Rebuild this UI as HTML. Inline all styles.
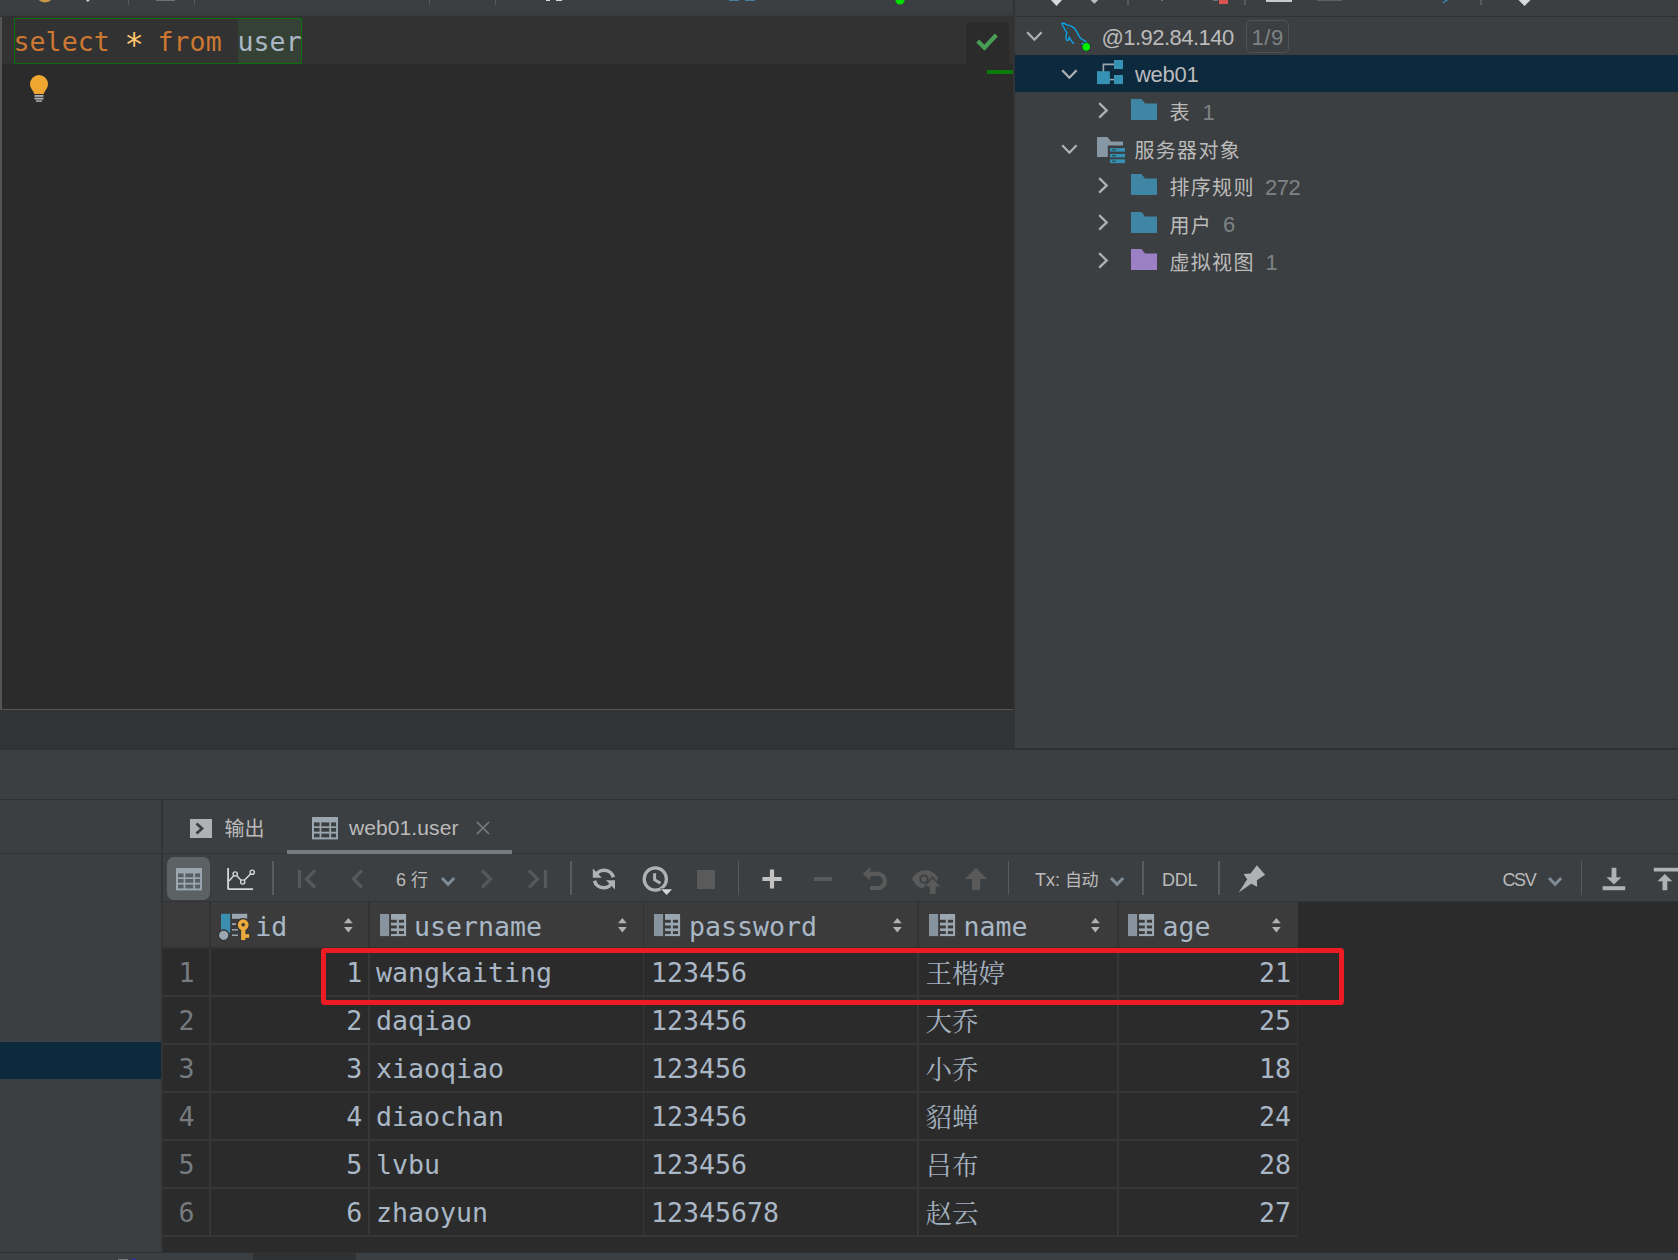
<!DOCTYPE html>
<html lang="zh"><head><meta charset="utf-8"><title>DataGrip - web01.user</title>
<style>
html,body{margin:0;padding:0}
body{width:1678px;height:1260px;overflow:hidden;background:#3c3f41;position:relative}
.r{position:absolute;display:block}
.t{position:absolute;display:block;white-space:pre}
.ui{font-family:"Liberation Sans","Noto Sans CJK SC",sans-serif}
.mono{font-family:"DejaVu Sans Mono","Liberation Mono","Noto Sans CJK SC",monospace}
.serif{font-family:"Noto Serif CJK SC","Liberation Serif",serif}
</style></head><body>
<div class="r" style="left:0px;top:0px;width:1013px;height:16px;background:linear-gradient(#3c3f41 0,#3c3f41 10px,#373a3c 16px);"></div>
<svg class="r" style="left:36px;top:0px;" width="18" height="3" viewBox="0 0 18 3"><ellipse cx="9" cy="-6" rx="9" ry="8.5" fill="#c99a45"/></svg>
<svg class="r" style="left:83px;top:0px;" width="8" height="3" viewBox="0 0 8 3"><path d="M2.800 0h4l-2 2z" fill="#d0d0d0"/></svg>
<div class="r" style="left:128px;top:0px;width:1px;height:5px;background:#55585a;"></div>
<div class="r" style="left:194px;top:0px;width:1px;height:5px;background:#55585a;"></div>
<div class="r" style="left:429px;top:0px;width:1px;height:5px;background:#55585a;"></div>
<div class="r" style="left:495px;top:0px;width:1px;height:5px;background:#55585a;"></div>
<div class="r" style="left:156px;top:0px;width:19px;height:1px;background:#6e7173;"></div>
<div class="r" style="left:546px;top:0px;width:4px;height:1px;background:#d8d8d8;"></div>
<div class="r" style="left:556px;top:0px;width:6px;height:1px;background:#d8d8d8;"></div>
<div class="r" style="left:729px;top:0px;width:10px;height:1px;background:#3f7f99;"></div>
<div class="r" style="left:745px;top:0px;width:10px;height:1px;background:#3f7f99;"></div>
<svg class="r" style="left:895px;top:0px;" width="10" height="5" viewBox="0 0 10 5"><circle cx="5" cy="0" r="4.5" fill="#00e000"/></svg>
<svg class="r" style="left:1050px;top:0px;" width="14" height="7" viewBox="0 0 14 7"><path d="M1 0H12L6.500 5.900z" fill="#d8d8d8"/></svg>
<svg class="r" style="left:1089px;top:0px;" width="11" height="5" viewBox="0 0 11 5"><path d="M1.600 0H9.200L5.400 3.700z" fill="#bdbdbd"/></svg>
<div class="r" style="left:1127px;top:0px;width:1.5px;height:5px;background:#5a5a58;"></div>
<div class="r" style="left:1244px;top:0px;width:1.5px;height:5px;background:#5a5a58;"></div>
<div class="r" style="left:1480px;top:0px;width:1.5px;height:4.5px;background:#5a5a58;"></div>
<div class="r" style="left:1161px;top:0px;width:2px;height:1px;background:#6e7173;"></div>
<div class="r" style="left:1218.5px;top:0px;width:9.5px;height:4px;background:#d9534f;"></div>
<div class="r" style="left:1213px;top:0px;width:5px;height:1px;background:#6e7173;"></div>
<div class="r" style="left:1266px;top:0px;width:26px;height:2px;background:#c9c9c9;"></div>
<div class="r" style="left:1317px;top:0px;width:25px;height:1px;background:#5e6163;"></div>
<svg class="r" style="left:1442px;top:0px;" width="6" height="3" viewBox="0 0 6 3"><path d="M0 3L4 0H6L1.500 3z" fill="#2f9fd8"/></svg>
<svg class="r" style="left:1517px;top:0px;" width="15" height="7" viewBox="0 0 15 7"><path d="M1.500 0H13.500L7.500 5.900z" fill="#d8d8d8"/></svg>
<div class="r" style="left:0px;top:16px;width:1013px;height:694px;background:#2b2b2b;"></div>
<div class="r" style="left:0px;top:16px;width:1015px;height:48px;background:#323232;"></div>
<div class="r" style="left:0px;top:17px;width:2px;height:693px;background:#555555;"></div>
<div class="r" style="left:0px;top:709px;width:1013px;height:1px;background:#555555;"></div>
<div class="r" style="left:1013px;top:0px;width:2px;height:749px;background:#323334;"></div>
<div class="r" style="left:238px;top:19px;width:63px;height:44px;background:#344134;"></div>
<div class="r" style="left:13.8px;top:17.6px;width:288.4px;height:46.6px;background:transparent;box-sizing:border-box;border:1.4px solid #0b700b"></div>
<span id="t1" class="t mono" style="left:13.6px;top:14.80px;font-size:26.6px;line-height:53px;color:#cc7832;letter-spacing:0.000px;">select</span>
<span id="t2" class="t mono" style="left:124.5px;top:12.43px;font-size:32px;line-height:64px;color:#ffc66d;letter-spacing:0.000px;">*</span>
<span id="t3" class="t mono" style="left:157.6px;top:14.80px;font-size:26.6px;line-height:53px;color:#cc7832;letter-spacing:0.000px;">from</span>
<span id="t4" class="t mono" style="left:237.6px;top:14.80px;font-size:26.6px;line-height:53px;color:#a9b7c6;letter-spacing:0.000px;">user</span>
<svg class="r" style="left:29px;top:74px;" width="20" height="28" viewBox="0 0 20 28"><path d="M10 1a9 9 0 0 1 9 9c0 3.6-2.2 5.6-3.6 8.2-.4.8-.6 1.3-.6 1.8H5.200c0-.5-.2-1-.6-1.8C3.200 15.600 1 13.600 1 10a9 9 0 0 1 9-9z" fill="#f0a732"/><rect x="5.500" y="21" width="9" height="1.800" fill="#afb1b3"/><rect x="5.500" y="23.700" width="9" height="1.800" fill="#afb1b3"/><rect x="7" y="26.300" width="6" height="1.500" fill="#afb1b3"/></svg>
<div class="r" style="left:966px;top:22px;width:43px;height:43px;background:#2b2b2b;border-radius:5px 5px 0 0"></div>
<svg class="r" style="left:974px;top:32px;" width="26" height="22" viewBox="0 0 26 22"><path d="M3.700 9L10.400 15.700L22.300 3" fill="none" stroke="#499c54" stroke-width="4.300"/></svg>
<div class="r" style="left:987px;top:70px;width:26px;height:4px;background:#0a7a0a;"></div>
<div class="r" style="left:0px;top:710px;width:1013px;height:38px;background:#313335;"></div>
<div class="r" style="left:0px;top:748px;width:1678px;height:2px;background:#2f3132;"></div>
<div class="r" style="left:0px;top:799px;width:1678px;height:1px;background:#2f3132;"></div>
<div class="r" style="left:1015px;top:16px;width:663px;height:1px;background:#2f3132;"></div>
<div class="r" style="left:1015px;top:55px;width:663px;height:37px;background:#0d293e;"></div>
<svg class="r" style="left:1026.2px;top:30.5px;" width="18" height="11" viewBox="0 0 18 11"><path d="M1.200 1.200L8.400 8.700L15.600 1.200" fill="none" stroke="#afb1b3" stroke-width="2.300"/></svg>
<svg class="r" style="left:1060px;top:21px;" width="32" height="32" viewBox="0 0 32 32"><g fill="none" stroke="#0aa6ec" stroke-width="1.350" stroke-linecap="round" stroke-linejoin="round"><path d="M2.100 2.400C3 2 4.400 2.300 6.400 3.600C8 4.200 9.300 4.300 12.100 5.600C15 7.200 17 10.700 18.400 14.100C19.200 16 19.900 17.500 22.100 18.400C24.500 19.300 26 20.500 27 21.600"/><path d="M26.400 22.100L22.400 22.400L22.100 23.600"/><path d="M2.100 2.400C2 3.500 2.600 4.500 4.100 7C5 9 6 10.500 7 11.900C6.300 13 6 15 6 17C6.200 18.500 6.800 19.300 7.300 19.600C8 19.600 8.400 19.300 8.600 18.500L9.300 15.900L10.100 17.900C11 19.500 12 21 13.600 22.400"/></g><circle cx="8.100" cy="7" r="0.700" fill="#1d7fae"/><circle cx="26.300" cy="25.900" r="4.300" fill="#00f000" stroke="#2a2530" stroke-width="0.800"/></svg>
<span id="t5" class="t ui" style="left:1101.5px;top:15.68px;font-size:22px;line-height:44px;color:#bbbbbb;letter-spacing:-0.527px;">@1.92.84.140</span>
<div class="r" style="left:1246px;top:20px;width:43px;height:33px;background:transparent;box-sizing:border-box;border:1px solid #505355;border-radius:5px"></div>
<span id="t6" class="t ui" style="left:1251.5px;top:15.68px;font-size:22px;line-height:44px;color:#7f8284;letter-spacing:0.562px;">1/9</span>
<svg class="r" style="left:1061.2px;top:68.5px;" width="18" height="11" viewBox="0 0 18 11"><path d="M1.200 1.200L8.400 8.700L15.600 1.200" fill="none" stroke="#afb1b3" stroke-width="2.300"/></svg>
<svg class="r" style="left:1097px;top:60px;" width="26" height="25" viewBox="0 0 26 25"><path d="M17 4.400H6.400V12.500" fill="none" stroke="#9aa7b0" stroke-width="1.600"/><path d="M12.500 19.600H17.500" fill="none" stroke="#9aa7b0" stroke-width="1.600"/><rect x="17" y="0" width="9" height="9" fill="#3592b4"/><rect x="0" y="11.200" width="12.900" height="12.900" fill="#3592b4"/><rect x="17" y="15" width="9" height="9.100" fill="#3592b4"/></svg>
<span id="t7" class="t ui" style="left:1135px;top:52.68px;font-size:22px;line-height:44px;color:#bbbbbb;letter-spacing:-0.299px;">web01</span>
<svg class="r" style="left:1097.5px;top:101.5px;" width="11" height="18" viewBox="0 0 11 18"><path d="M1.200 1.200L8.700 8.400L1.200 15.600" fill="none" stroke="#afb1b3" stroke-width="2.300"/></svg>
<svg class="r" style="left:1131px;top:99.1px;" width="26" height="21" viewBox="0 0 26 21"><path d="M0 0H10.500L14 4.500H26V21H0z" fill="#3e86a3"/></svg>
<span id="t8" class="t ui" style="left:1169.5px;top:93.37px;font-size:20px;line-height:40px;color:#bbbbbb;letter-spacing:1.300px;">表</span>
<span id="t9" class="t ui" style="left:1202.5px;top:90.68px;font-size:22px;line-height:44px;color:#7f8284;letter-spacing:0.000px;">1</span>
<svg class="r" style="left:1061.2px;top:143.5px;" width="18" height="11" viewBox="0 0 18 11"><path d="M1.200 1.200L8.400 8.700L15.600 1.200" fill="none" stroke="#afb1b3" stroke-width="2.300"/></svg>
<svg class="r" style="left:1097px;top:137px;" width="29" height="27" viewBox="0 0 29 27"><path d="M0 0H10.500L14 4.500H26V8.400H10.800V20H0z" fill="#8797a3"/><rect x="13" y="11.100" width="15" height="3.500" fill="#3592b4"/><rect x="13" y="16.900" width="15" height="3.500" fill="#3592b4"/><rect x="13" y="22.300" width="15" height="3.800" fill="#3592b4"/><rect x="15" y="12.300" width="4" height="1.200" fill="#2b4a58"/><rect x="15" y="18.100" width="4" height="1.200" fill="#2b4a58"/><rect x="15" y="23.600" width="4" height="1.200" fill="#2b4a58"/></svg>
<span id="t10" class="t ui" style="left:1134.5px;top:130.87px;font-size:20px;line-height:40px;color:#bbbbbb;letter-spacing:1.300px;">服务器对象</span>
<svg class="r" style="left:1097.5px;top:176.5px;" width="11" height="18" viewBox="0 0 11 18"><path d="M1.200 1.200L8.700 8.400L1.200 15.600" fill="none" stroke="#afb1b3" stroke-width="2.300"/></svg>
<svg class="r" style="left:1131px;top:174.1px;" width="26" height="21" viewBox="0 0 26 21"><path d="M0 0H10.500L14 4.500H26V21H0z" fill="#3e86a3"/></svg>
<span id="t11" class="t ui" style="left:1169.5px;top:168.37px;font-size:20px;line-height:40px;color:#bbbbbb;letter-spacing:1.300px;">排序规则</span>
<span id="t12" class="t ui" style="left:1265px;top:165.68px;font-size:22px;line-height:44px;color:#7f8284;letter-spacing:-0.487px;">272</span>
<svg class="r" style="left:1097.5px;top:213.5px;" width="11" height="18" viewBox="0 0 11 18"><path d="M1.200 1.200L8.700 8.400L1.200 15.600" fill="none" stroke="#afb1b3" stroke-width="2.300"/></svg>
<svg class="r" style="left:1131px;top:211.6px;" width="26" height="21" viewBox="0 0 26 21"><path d="M0 0H10.500L14 4.500H26V21H0z" fill="#3e86a3"/></svg>
<span id="t13" class="t ui" style="left:1169.5px;top:205.87px;font-size:20px;line-height:40px;color:#bbbbbb;letter-spacing:1.300px;">用户</span>
<span id="t14" class="t ui" style="left:1223px;top:203.18px;font-size:22px;line-height:44px;color:#7f8284;letter-spacing:0.000px;">6</span>
<svg class="r" style="left:1097.5px;top:251.5px;" width="11" height="18" viewBox="0 0 11 18"><path d="M1.200 1.200L8.700 8.400L1.200 15.600" fill="none" stroke="#afb1b3" stroke-width="2.300"/></svg>
<svg class="r" style="left:1131px;top:249.1px;" width="26" height="21" viewBox="0 0 26 21"><path d="M0 0H10.500L14 4.500H26V21H0z" fill="#9b80c6"/></svg>
<span id="t15" class="t ui" style="left:1169.5px;top:243.37px;font-size:20px;line-height:40px;color:#bbbbbb;letter-spacing:1.300px;">虚拟视图</span>
<span id="t16" class="t ui" style="left:1265.5px;top:240.68px;font-size:22px;line-height:44px;color:#7f8284;letter-spacing:0.000px;">1</span>
<div class="r" style="left:0px;top:1042px;width:161px;height:37px;background:#0d293e;"></div>
<div class="r" style="left:161px;top:800px;width:2px;height:452px;background:#313334;"></div>
<div class="r" style="left:0px;top:853px;width:1678px;height:1px;background:#313334;"></div>
<svg class="r" style="left:190px;top:819px;" width="22" height="19" viewBox="0 0 22 19"><rect width="22" height="19" fill="#afb1b3"/><path d="M6.500 4.500L12 9.500L6.500 14.500" fill="none" stroke="#3c3f41" stroke-width="2.800"/></svg>
<span id="t17" class="t ui" style="left:224.5px;top:809.07px;font-size:20px;line-height:40px;color:#bbbbbb;letter-spacing:0.000px;">输出</span>
<svg class="r" style="left:312px;top:816.8px;" width="26" height="23" viewBox="0 0 26 23"><rect x="0" y="0" width="26" height="22.400" fill="#9aa7b0"/><rect x="2.0" y="5.4" width="5.6" height="3.9" fill="#3c3f41"/><rect x="2.0" y="11.0" width="5.6" height="3.7" fill="#3c3f41"/><rect x="2.0" y="16.6" width="5.6" height="3.8" fill="#3c3f41"/><rect x="9.3" y="5.4" width="8.0" height="3.9" fill="#3c3f41"/><rect x="9.3" y="11.0" width="8.0" height="3.7" fill="#3c3f41"/><rect x="9.3" y="16.6" width="8.0" height="3.8" fill="#3c3f41"/><rect x="19.1" y="5.4" width="5.0" height="3.9" fill="#3c3f41"/><rect x="19.1" y="11.0" width="5.0" height="3.7" fill="#3c3f41"/><rect x="19.1" y="16.6" width="5.0" height="3.8" fill="#3c3f41"/></svg>
<span id="t18" class="t ui" style="left:349px;top:806.72px;font-size:21px;line-height:42px;color:#bbbbbb;letter-spacing:0.097px;">web01.user</span>
<svg class="r" style="left:476px;top:821px;" width="14" height="14" viewBox="0 0 14 14"><path d="M1 1L13 13M13 1L1 13" stroke="#7a7d7f" stroke-width="1.600" fill="none"/></svg>
<div class="r" style="left:287px;top:850px;width:225px;height:4px;background:#747a80;"></div>
<div class="r" style="left:167px;top:857px;width:43px;height:43px;background:#5c6164;border-radius:7px"></div>
<svg class="r" style="left:176px;top:867.8px;" width="26" height="23" viewBox="0 0 26 23"><rect x="0" y="0" width="26" height="22.400" fill="#9aa7b0"/><rect x="2.0" y="5.4" width="5.6" height="3.9" fill="#595e62"/><rect x="2.0" y="11.0" width="5.6" height="3.7" fill="#595e62"/><rect x="2.0" y="16.6" width="5.6" height="3.8" fill="#595e62"/><rect x="9.3" y="5.4" width="8.0" height="3.9" fill="#595e62"/><rect x="9.3" y="11.0" width="8.0" height="3.7" fill="#595e62"/><rect x="9.3" y="16.6" width="8.0" height="3.8" fill="#595e62"/><rect x="19.1" y="5.4" width="5.0" height="3.9" fill="#595e62"/><rect x="19.1" y="11.0" width="5.0" height="3.7" fill="#595e62"/><rect x="19.1" y="16.6" width="5.0" height="3.8" fill="#595e62"/></svg>
<svg class="r" style="left:226px;top:866px;" width="31" height="26" viewBox="0 0 31 26"><path d="M2.100 2V22.200Q2.100 23.200 3.100 23.200H27.100" fill="none" stroke="#d6d6da" stroke-width="1.800"/><path d="M3 15.100L9.200 8L16.700 16L26.200 6.200" fill="none" stroke="#d6d6da" stroke-width="1.500"/><circle cx="9.200" cy="8" r="2.100" fill="#3c3f41" stroke="#d6d6da" stroke-width="1.400"/><circle cx="16.700" cy="16" r="2.100" fill="#3c3f41" stroke="#d6d6da" stroke-width="1.400"/><circle cx="26.200" cy="6.200" r="2.100" fill="#3c3f41" stroke="#d6d6da" stroke-width="1.400"/></svg>
<div class="r" style="left:272px;top:861px;width:1.5px;height:34px;background:#595c5e;"></div>
<div class="r" style="left:570px;top:861px;width:1.5px;height:34px;background:#595c5e;"></div>
<div class="r" style="left:737.5px;top:861px;width:1.5px;height:34px;background:#595c5e;"></div>
<div class="r" style="left:1007.5px;top:861px;width:1.5px;height:34px;background:#595c5e;"></div>
<div class="r" style="left:1142px;top:861px;width:1.5px;height:34px;background:#595c5e;"></div>
<div class="r" style="left:1218px;top:861px;width:1.5px;height:34px;background:#595c5e;"></div>
<div class="r" style="left:1580.5px;top:861px;width:1.5px;height:34px;background:#595c5e;"></div>
<svg class="r" style="left:298px;top:869px;" width="19" height="20" viewBox="0 0 19 20"><path d="M1.500 1V19" stroke="#585858" stroke-width="3.200" fill="none"/><path d="M17 1.500L8.500 10L17 18.500" stroke="#585858" stroke-width="3.200" fill="none"/></svg>
<svg class="r" style="left:351px;top:869px;" width="13" height="20" viewBox="0 0 13 20"><path d="M11 1.500L2.500 10L11 18.500" stroke="#585858" stroke-width="3.200" fill="none"/></svg>
<span id="t19" class="t ui" style="left:396px;top:861.76px;font-size:18px;line-height:36px;color:#bbbbbb;letter-spacing:0.000px;">6 <span style="font-size:17px">行</span></span>
<svg class="r" style="left:440px;top:875.5px;" width="17" height="12" viewBox="0 0 17 12"><path d="M2 2L8.100 8.300L14.200 2" stroke="#7d8b99" stroke-width="3" fill="none"/></svg>
<svg class="r" style="left:479.5px;top:869px;" width="13" height="20" viewBox="0 0 13 20"><path d="M2 1.500L10.500 10L2 18.500" stroke="#585858" stroke-width="3.200" fill="none"/></svg>
<svg class="r" style="left:527px;top:869px;" width="20" height="20" viewBox="0 0 20 20"><path d="M18.500 1V19" stroke="#585858" stroke-width="3.200" fill="none"/><path d="M2 1.500L10.500 10L2 18.500" stroke="#585858" stroke-width="3.200" fill="none"/></svg>
<svg class="r" style="left:592px;top:867px;" width="25" height="25" viewBox="0 0 25 25"><path d="M3.300 9.500A9.400 9.400 0 0 1 21.300 10.300" fill="none" stroke="#afb1b3" stroke-width="3.600"/><path d="M0.800 1.500V10.700H9.900z" fill="#afb1b3"/><path d="M20.500 14.500A9.400 9.400 0 0 1 2.500 13.700" fill="none" stroke="#afb1b3" stroke-width="3.600"/><path d="M23 22.500V13.300H13.900z" fill="#afb1b3"/></svg>
<svg class="r" style="left:641px;top:865px;" width="33" height="32" viewBox="0 0 33 32"><circle cx="14.300" cy="14" r="11.100" fill="none" stroke="#afb1b3" stroke-width="3.300"/><path d="M13.600 8.200V14.700L19.400 18.300" fill="none" stroke="#afb1b3" stroke-width="3"/><path d="M19 23.500H32.500L25.700 31z" fill="#3c3f41"/><path d="M20.300 24.200H31L25.600 29.900z" fill="#d6d6d6"/></svg>
<div class="r" style="left:696.5px;top:870px;width:18.5px;height:18.5px;background:#5a5a5a;"></div>
<svg class="r" style="left:762px;top:869px;" width="20" height="20" viewBox="0 0 20 20"><path d="M10 0.400V19.500M0.400 10H19.600" stroke="#c2c2c2" stroke-width="4.200" fill="none"/></svg>
<div class="r" style="left:813.8px;top:876.7px;width:18.6px;height:4.2px;background:#5a5a5a;"></div>
<svg class="r" style="left:862px;top:866px;" width="27" height="26" viewBox="0 0 27 26"><path d="M8 7.900H15.900A7.050 7.050 0 0 1 15.900 22H8" fill="none" stroke="#5a5a5a" stroke-width="4.200"/><path d="M0.800 7.900L8.200 0.700V14.600z" fill="#5a5a5a"/></svg>
<svg class="r" style="left:911px;top:868px;" width="30" height="28" viewBox="0 0 30 28"><path d="M1.100 11.100C6 0 21 -1 27 10.300C25 15 18 20.500 10.300 20C6 19 3 15.500 1.100 11.100z" fill="#5a5a5a"/><circle cx="13" cy="11.100" r="4.700" fill="#3c3f41"/><circle cx="13" cy="11.100" r="2.900" fill="#5a5a5a"/><path d="M21.500 7.800L30.800 19.800H25.800V27.500H17.200V19.800H12.200z" fill="#3c3f41"/><path d="M21.500 10.300L29 18.500H24.500V26H18.800V18.500H14.500z" fill="#5a5a5a"/></svg>
<svg class="r" style="left:964px;top:867px;" width="24" height="24" viewBox="0 0 24 24"><path d="M12 0.900L23.200 12.100H16.200V23H8V12.100H0.800z" fill="#5a5a5a"/></svg>
<span id="t20" class="t ui" style="left:1035px;top:861.76px;font-size:18px;line-height:36px;color:#bbbbbb;letter-spacing:0.000px;">Tx: <span style="font-size:17px;letter-spacing:-0.5px">自动</span></span>
<svg class="r" style="left:1109px;top:875.5px;" width="17" height="12" viewBox="0 0 17 12"><path d="M2 2L8.100 8.300L14.200 2" stroke="#7d8b99" stroke-width="3" fill="none"/></svg>
<span id="t21" class="t ui" style="left:1162px;top:861.76px;font-size:18px;line-height:36px;color:#bbbbbb;letter-spacing:-0.206px;">DDL</span>
<svg class="r" style="left:1237px;top:865px;" width="30" height="29" viewBox="0 0 30 29"><path d="M19.850 0.300L28.100 9.700L19.850 15.350L20.200 21.800L14.200 18.750L1.700 27.500L10.200 14.200L6.600 8.900L13.600 8.550z" fill="#afb1b3"/></svg>
<span id="t22" class="t ui" style="left:1502.5px;top:861.76px;font-size:18px;line-height:36px;color:#bbbbbb;letter-spacing:-1.406px;">CSV</span>
<svg class="r" style="left:1547px;top:875.5px;" width="17" height="12" viewBox="0 0 17 12"><path d="M2 2L8.100 8.300L14.200 2" stroke="#7d8b99" stroke-width="3" fill="none"/></svg>
<svg class="r" style="left:1602px;top:867px;" width="24" height="24" viewBox="0 0 24 24"><rect x="9.600" y="0.800" width="4.800" height="10" fill="#afb1b3"/><path d="M4.500 10.300H19.300L12 17.600z" fill="#afb1b3"/><rect x="0.600" y="19.200" width="22.600" height="4" fill="#afb1b3"/></svg>
<svg class="r" style="left:1653px;top:867px;" width="25" height="24" viewBox="0 0 25 24"><rect x="0.800" y="0.800" width="24.200" height="3.700" fill="#afb1b3"/><rect x="9.500" y="13" width="4.800" height="10.200" fill="#afb1b3"/><path d="M4.500 14.200H19.300L11.800 6.900z" fill="#afb1b3"/></svg>
<div class="r" style="left:163px;top:900px;width:1515px;height:352px;background:#2b2b2b;"></div>
<div class="r" style="left:163px;top:900px;width:1515px;height:0.6px;background:#3c3f41;"></div>
<div class="r" style="left:163px;top:900.6px;width:1515px;height:1.3px;background:#323334;"></div>
<div class="r" style="left:163px;top:901.8px;width:1134.5px;height:45.2px;background:#3b3b3b;"></div>
<div class="r" style="left:163px;top:947px;width:1134.5px;height:2px;background:#313131;"></div>
<div class="r" style="left:163px;top:995px;width:1134.5px;height:2px;background:#373737;"></div>
<div class="r" style="left:163px;top:1043px;width:1134.5px;height:2px;background:#373737;"></div>
<div class="r" style="left:163px;top:1091px;width:1134.5px;height:2px;background:#373737;"></div>
<div class="r" style="left:163px;top:1139px;width:1134.5px;height:2px;background:#373737;"></div>
<div class="r" style="left:163px;top:1187px;width:1134.5px;height:2px;background:#373737;"></div>
<div class="r" style="left:163px;top:1235px;width:1134.5px;height:2px;background:#373737;"></div>
<div class="r" style="left:209px;top:949px;width:2px;height:288px;background:#373737;"></div>
<div class="r" style="left:209px;top:901.8px;width:2px;height:45.2px;background:#323232;"></div>
<div class="r" style="left:368px;top:949px;width:2px;height:288px;background:#373737;"></div>
<div class="r" style="left:368px;top:901.8px;width:2px;height:45.2px;background:#323232;"></div>
<div class="r" style="left:642.7px;top:949px;width:1.5px;height:288px;background:#373737;"></div>
<div class="r" style="left:642.7px;top:901.8px;width:1.5px;height:45.2px;background:#323232;"></div>
<div class="r" style="left:917px;top:949px;width:2px;height:288px;background:#373737;"></div>
<div class="r" style="left:917px;top:901.8px;width:2px;height:45.2px;background:#323232;"></div>
<div class="r" style="left:1117px;top:949px;width:1.6px;height:288px;background:#373737;"></div>
<div class="r" style="left:1117px;top:901.8px;width:1.6px;height:45.2px;background:#323232;"></div>
<div class="r" style="left:1297px;top:949px;width:1.2px;height:288px;background:#343434;"></div>
<svg class="r" style="left:218px;top:912px;" width="33" height="30" viewBox="0 0 33 30"><rect x="3" y="1.800" width="9.200" height="19.300" fill="#3a8fb0"/><circle cx="5.700" cy="23.300" r="5.300" fill="#9aa7b0" stroke="#343434" stroke-width="1.300"/><rect x="14" y="1.800" width="15.200" height="5" fill="#9aa7b0"/><path d="M14 12.100H18M14 17.700H20M14 23.200H20" stroke="#9aa7b0" stroke-width="1.600"/><circle cx="25.200" cy="12.800" r="6.700" fill="#343434"/><rect x="22" y="15" width="6.500" height="14.200" fill="#343434"/><rect x="26" y="21" width="6.300" height="6" fill="#343434"/><circle cx="25.200" cy="12.800" r="3.600" fill="none" stroke="#eaa93c" stroke-width="3.700"/><rect x="23.100" y="16" width="4.300" height="12.100" fill="#eaa93c"/><rect x="27" y="22.100" width="4.200" height="3.800" fill="#eaa93c"/></svg>
<span id="t23" class="t mono" style="left:255.3px;top:899.80px;font-size:26.6px;line-height:53px;color:#a9b7c6;letter-spacing:0.000px;">id</span>
<svg class="r" style="left:343.6px;top:917.8px;" width="10" height="15" viewBox="0 0 10 15"><path d="M4.350 0L8.700 5.200H0z" fill="#b2b2b2"/><path d="M0 9.100H8.700L4.350 14.500z" fill="#b2b2b2"/></svg>
<svg class="r" style="left:380px;top:914px;" width="27" height="23" viewBox="0 0 27 23"><rect x="0" y="0" width="9.100" height="22.100" fill="#87939e"/><rect x="11" y="0" width="15.100" height="22.100" fill="#9aa7b0"/><rect x="11" y="5.8" width="5.8" height="2.900" fill="#3b3b3b"/><rect x="11" y="11.5" width="5.8" height="2.900" fill="#3b3b3b"/><rect x="11" y="17.1" width="5.8" height="2.900" fill="#3b3b3b"/><rect x="18.9" y="5.8" width="5.1" height="2.900" fill="#3b3b3b"/><rect x="18.9" y="11.5" width="5.1" height="2.900" fill="#3b3b3b"/><rect x="18.9" y="17.1" width="5.1" height="2.900" fill="#3b3b3b"/></svg>
<span id="t24" class="t mono" style="left:414px;top:899.80px;font-size:26.6px;line-height:53px;color:#a9b7c6;letter-spacing:0.000px;">username</span>
<svg class="r" style="left:617.6px;top:917.8px;" width="10" height="15" viewBox="0 0 10 15"><path d="M4.350 0L8.700 5.200H0z" fill="#b2b2b2"/><path d="M0 9.100H8.700L4.350 14.500z" fill="#b2b2b2"/></svg>
<svg class="r" style="left:653.9px;top:914px;" width="27" height="23" viewBox="0 0 27 23"><rect x="0" y="0" width="9.100" height="22.100" fill="#87939e"/><rect x="11" y="0" width="15.100" height="22.100" fill="#9aa7b0"/><rect x="11" y="5.8" width="5.8" height="2.900" fill="#3b3b3b"/><rect x="11" y="11.5" width="5.8" height="2.900" fill="#3b3b3b"/><rect x="11" y="17.1" width="5.8" height="2.900" fill="#3b3b3b"/><rect x="18.9" y="5.8" width="5.1" height="2.900" fill="#3b3b3b"/><rect x="18.9" y="11.5" width="5.1" height="2.900" fill="#3b3b3b"/><rect x="18.9" y="17.1" width="5.1" height="2.900" fill="#3b3b3b"/></svg>
<span id="t25" class="t mono" style="left:689px;top:899.80px;font-size:26.6px;line-height:53px;color:#a9b7c6;letter-spacing:0.000px;">password</span>
<svg class="r" style="left:892.6px;top:917.8px;" width="10" height="15" viewBox="0 0 10 15"><path d="M4.350 0L8.700 5.200H0z" fill="#b2b2b2"/><path d="M0 9.100H8.700L4.350 14.500z" fill="#b2b2b2"/></svg>
<svg class="r" style="left:928.9px;top:914px;" width="27" height="23" viewBox="0 0 27 23"><rect x="0" y="0" width="9.100" height="22.100" fill="#87939e"/><rect x="11" y="0" width="15.100" height="22.100" fill="#9aa7b0"/><rect x="11" y="5.8" width="5.8" height="2.900" fill="#3b3b3b"/><rect x="11" y="11.5" width="5.8" height="2.900" fill="#3b3b3b"/><rect x="11" y="17.1" width="5.8" height="2.900" fill="#3b3b3b"/><rect x="18.9" y="5.8" width="5.1" height="2.900" fill="#3b3b3b"/><rect x="18.9" y="11.5" width="5.1" height="2.900" fill="#3b3b3b"/><rect x="18.9" y="17.1" width="5.1" height="2.900" fill="#3b3b3b"/></svg>
<span id="t26" class="t mono" style="left:963.5px;top:899.80px;font-size:26.6px;line-height:53px;color:#a9b7c6;letter-spacing:0.000px;">name</span>
<svg class="r" style="left:1091.4px;top:917.8px;" width="10" height="15" viewBox="0 0 10 15"><path d="M4.350 0L8.700 5.200H0z" fill="#b2b2b2"/><path d="M0 9.100H8.700L4.350 14.500z" fill="#b2b2b2"/></svg>
<svg class="r" style="left:1128px;top:914px;" width="27" height="23" viewBox="0 0 27 23"><rect x="0" y="0" width="9.100" height="22.100" fill="#87939e"/><rect x="11" y="0" width="15.100" height="22.100" fill="#9aa7b0"/><rect x="11" y="5.8" width="5.8" height="2.900" fill="#3b3b3b"/><rect x="11" y="11.5" width="5.8" height="2.900" fill="#3b3b3b"/><rect x="11" y="17.1" width="5.8" height="2.900" fill="#3b3b3b"/><rect x="18.9" y="5.8" width="5.1" height="2.900" fill="#3b3b3b"/><rect x="18.9" y="11.5" width="5.1" height="2.900" fill="#3b3b3b"/><rect x="18.9" y="17.1" width="5.1" height="2.900" fill="#3b3b3b"/></svg>
<span id="t27" class="t mono" style="left:1162.5px;top:899.80px;font-size:26.6px;line-height:53px;color:#a9b7c6;letter-spacing:0.000px;">age</span>
<svg class="r" style="left:1271.6px;top:917.8px;" width="10" height="15" viewBox="0 0 10 15"><path d="M4.350 0L8.700 5.200H0z" fill="#b2b2b2"/><path d="M0 9.100H8.700L4.350 14.500z" fill="#b2b2b2"/></svg>
<span id="t28" class="t mono" style="left:178.5px;top:946.30px;font-size:26.6px;line-height:53px;color:#777b7f;letter-spacing:0.000px;">1</span>
<span id="t29" class="t mono" style="left:346.3px;top:946.30px;font-size:26.6px;line-height:53px;color:#a9b7c6;letter-spacing:0.000px;">1</span>
<span id="t30" class="t mono" style="left:376px;top:946.30px;font-size:26.6px;line-height:53px;color:#a9b7c6;letter-spacing:0.000px;">wangkaiting</span>
<span id="t31" class="t mono" style="left:651px;top:946.30px;font-size:26.6px;line-height:53px;color:#a9b7c6;letter-spacing:0.000px;">123456</span>
<span id="t32" class="t serif" style="left:925.5px;top:944.54px;font-size:26.5px;line-height:53px;color:#a3b0be;letter-spacing:0.000px;">王楷婷</span>
<span id="t33" class="t mono" style="left:1259px;top:946.30px;font-size:26.6px;line-height:53px;color:#a9b7c6;letter-spacing:0.000px;">21</span>
<span id="t34" class="t mono" style="left:178.5px;top:994.30px;font-size:26.6px;line-height:53px;color:#777b7f;letter-spacing:0.000px;">2</span>
<span id="t35" class="t mono" style="left:346.3px;top:994.30px;font-size:26.6px;line-height:53px;color:#a9b7c6;letter-spacing:0.000px;">2</span>
<span id="t36" class="t mono" style="left:376px;top:994.30px;font-size:26.6px;line-height:53px;color:#a9b7c6;letter-spacing:0.000px;">daqiao</span>
<span id="t37" class="t mono" style="left:651px;top:994.30px;font-size:26.6px;line-height:53px;color:#a9b7c6;letter-spacing:0.000px;">123456</span>
<span id="t38" class="t serif" style="left:925.5px;top:992.54px;font-size:26.5px;line-height:53px;color:#a3b0be;letter-spacing:0.000px;">大乔</span>
<span id="t39" class="t mono" style="left:1259px;top:994.30px;font-size:26.6px;line-height:53px;color:#a9b7c6;letter-spacing:0.000px;">25</span>
<span id="t40" class="t mono" style="left:178.5px;top:1042.30px;font-size:26.6px;line-height:53px;color:#777b7f;letter-spacing:0.000px;">3</span>
<span id="t41" class="t mono" style="left:346.3px;top:1042.30px;font-size:26.6px;line-height:53px;color:#a9b7c6;letter-spacing:0.000px;">3</span>
<span id="t42" class="t mono" style="left:376px;top:1042.30px;font-size:26.6px;line-height:53px;color:#a9b7c6;letter-spacing:0.000px;">xiaoqiao</span>
<span id="t43" class="t mono" style="left:651px;top:1042.30px;font-size:26.6px;line-height:53px;color:#a9b7c6;letter-spacing:0.000px;">123456</span>
<span id="t44" class="t serif" style="left:925.5px;top:1040.54px;font-size:26.5px;line-height:53px;color:#a3b0be;letter-spacing:0.000px;">小乔</span>
<span id="t45" class="t mono" style="left:1259px;top:1042.30px;font-size:26.6px;line-height:53px;color:#a9b7c6;letter-spacing:0.000px;">18</span>
<span id="t46" class="t mono" style="left:178.5px;top:1090.30px;font-size:26.6px;line-height:53px;color:#777b7f;letter-spacing:0.000px;">4</span>
<span id="t47" class="t mono" style="left:346.3px;top:1090.30px;font-size:26.6px;line-height:53px;color:#a9b7c6;letter-spacing:0.000px;">4</span>
<span id="t48" class="t mono" style="left:376px;top:1090.30px;font-size:26.6px;line-height:53px;color:#a9b7c6;letter-spacing:0.000px;">diaochan</span>
<span id="t49" class="t mono" style="left:651px;top:1090.30px;font-size:26.6px;line-height:53px;color:#a9b7c6;letter-spacing:0.000px;">123456</span>
<span id="t50" class="t serif" style="left:925.5px;top:1088.54px;font-size:26.5px;line-height:53px;color:#a3b0be;letter-spacing:0.000px;">貂蝉</span>
<span id="t51" class="t mono" style="left:1259px;top:1090.30px;font-size:26.6px;line-height:53px;color:#a9b7c6;letter-spacing:0.000px;">24</span>
<span id="t52" class="t mono" style="left:178.5px;top:1138.30px;font-size:26.6px;line-height:53px;color:#777b7f;letter-spacing:0.000px;">5</span>
<span id="t53" class="t mono" style="left:346.3px;top:1138.30px;font-size:26.6px;line-height:53px;color:#a9b7c6;letter-spacing:0.000px;">5</span>
<span id="t54" class="t mono" style="left:376px;top:1138.30px;font-size:26.6px;line-height:53px;color:#a9b7c6;letter-spacing:0.000px;">lvbu</span>
<span id="t55" class="t mono" style="left:651px;top:1138.30px;font-size:26.6px;line-height:53px;color:#a9b7c6;letter-spacing:0.000px;">123456</span>
<span id="t56" class="t serif" style="left:925.5px;top:1136.54px;font-size:26.5px;line-height:53px;color:#a3b0be;letter-spacing:0.000px;">吕布</span>
<span id="t57" class="t mono" style="left:1259px;top:1138.30px;font-size:26.6px;line-height:53px;color:#a9b7c6;letter-spacing:0.000px;">28</span>
<span id="t58" class="t mono" style="left:178.5px;top:1186.30px;font-size:26.6px;line-height:53px;color:#777b7f;letter-spacing:0.000px;">6</span>
<span id="t59" class="t mono" style="left:346.3px;top:1186.30px;font-size:26.6px;line-height:53px;color:#a9b7c6;letter-spacing:0.000px;">6</span>
<span id="t60" class="t mono" style="left:376px;top:1186.30px;font-size:26.6px;line-height:53px;color:#a9b7c6;letter-spacing:0.000px;">zhaoyun</span>
<span id="t61" class="t mono" style="left:651px;top:1186.30px;font-size:26.6px;line-height:53px;color:#a9b7c6;letter-spacing:0.000px;">12345678</span>
<span id="t62" class="t serif" style="left:925.5px;top:1184.54px;font-size:26.5px;line-height:53px;color:#a3b0be;letter-spacing:0.000px;">赵云</span>
<span id="t63" class="t mono" style="left:1259px;top:1186.30px;font-size:26.6px;line-height:53px;color:#a9b7c6;letter-spacing:0.000px;">27</span>
<div class="r" style="left:321px;top:948px;width:1023px;height:57px;background:transparent;box-sizing:border-box;border:5px solid #ed1c24;border-radius:3.5px"></div>
<div class="r" style="left:0px;top:1252px;width:1678px;height:1.4px;background:#2e3032;"></div>
<div class="r" style="left:0px;top:1253px;width:1678px;height:7px;background:#3c3f41;"></div>
<div class="r" style="left:253px;top:1253px;width:103px;height:7px;background:#2f3133;"></div>
<div class="r" style="left:118px;top:1259px;width:10px;height:1px;background:#77797b;"></div>
<div class="r" style="left:132px;top:1259px;width:4px;height:1px;background:#2a2ab8;"></div>
</body></html>
